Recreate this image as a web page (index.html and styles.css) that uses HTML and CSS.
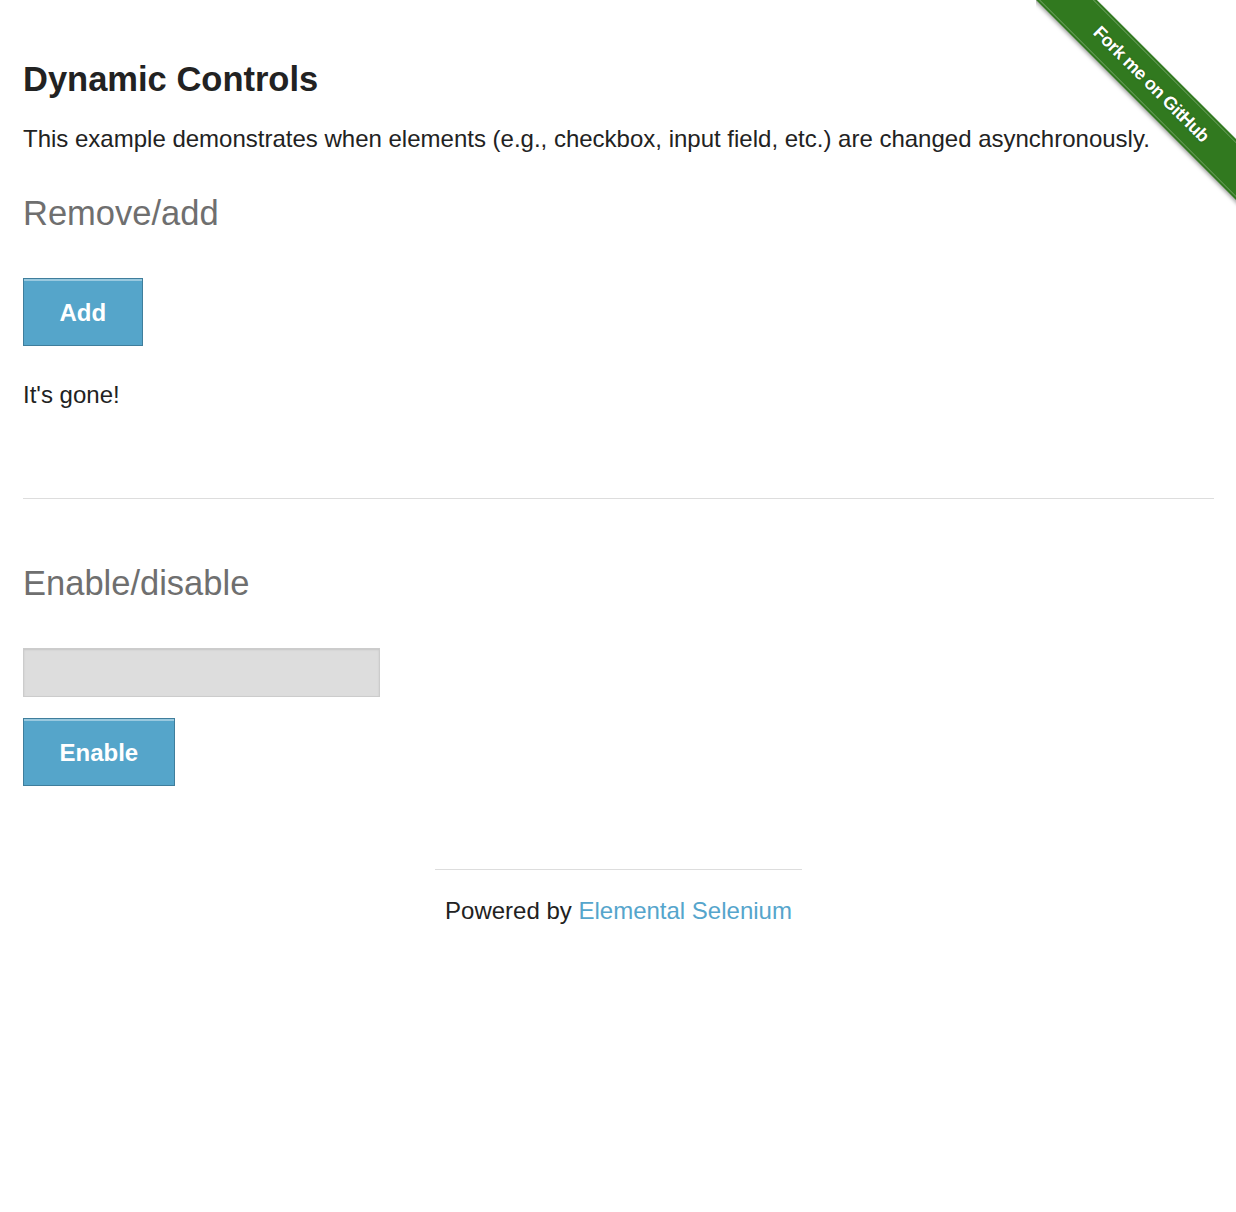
FILE: index.html
```html
<!DOCTYPE html>
<html lang="en">
<head>
<meta charset="utf-8">
<title>The Internet</title>
<link rel="stylesheet" href="styles.css">
</head>
<body>
<a class="ribbon-wrap" href="#"><span class="ribbon">Fork me on GitHub</span></a>
<div class="page">
  <div class="example">
    <h3 class="title">Dynamic Controls</h3>
    <p class="intro">This example demonstrates when elements (e.g., checkbox, input field, etc.) are changed asynchronously.</p>
    <h4 class="subtitle">Remove/add</h4>
    <form class="form form-checkbox">
      <button type="button" class="btn">Add</button>
      <p class="message">It's gone!</p>
    </form>
    <hr class="divider">
    <h4 class="subtitle subtitle-second">Enable/disable</h4>
    <form class="form form-input">
      <input type="text" class="field" disabled>
      <button type="button" class="btn btn-enable">Enable</button>
    </form>
  </div>
  <div class="footer">
    <hr class="footer-rule">
    <div class="footer-text">Powered by <a class="footer-link" href="#">Elemental Selenium</a></div>
  </div>
</div>
</body>
</html>
```
FILE: styles.css
```css
html, body {
  margin: 0;
  padding: 0;
  background: #fff;
}
body {
  font-family: "Liberation Sans", Arial, Helvetica, sans-serif;
  color: #222;
  font-size: 24px;
  line-height: 38.4px;
  position: relative;
}
.page {
  padding: 0 22px 0 23px;
}
.example {
  display: flex;
  flex-direction: column;
  align-items: flex-start;
}
.title {
  font-size: 34.5px;
  line-height: 41.4px;
  font-weight: bold;
  color: #222;
  margin: 59px 0 19.5px 0;
}
.intro {
  margin: 0;
}
.subtitle {
  font-size: 34.5px;
  line-height: 41.4px;
  font-weight: normal;
  color: #6f6f6f;
  margin: 35px 0 0 0;
}
.subtitle-second {
  margin-top: 64.5px;
}
.form {
  display: flex;
  flex-direction: column;
  align-items: flex-start;
  margin: 43px 0 0 0;
}
.btn {
  font-family: "Liberation Sans", Arial, Helvetica, sans-serif;
  font-size: 24px;
  font-weight: bold;
  line-height: 24px;
  color: #fff;
  background: #55a5ca;
  border: 1px solid #3f7e9c;
  box-shadow: inset 0 2px 0 rgba(255,255,255,0.4);
  padding: 22px 35.5px 20px 35.5px;
  margin: 0;
  cursor: pointer;
}
.message {
  margin: 30.5px 0 0 0;
}
.divider {
  align-self: stretch;
  border: 0;
  border-top: 1px solid #ddd;
  height: 0;
  margin: 83px 0 0 0;
}
.field {
  box-sizing: border-box;
  width: 357px;
  height: 49px;
  margin: 0;
  background: #ddd;
  border: 1px solid #ccc;
  box-shadow: inset 0 1px 2px rgba(0,0,0,0.1);
  font-size: 24px;
}
.btn-enable {
  margin-top: 21px;
}
.footer {
  display: flex;
  flex-direction: column;
  align-items: center;
  margin-top: 83px;
}
.footer-rule {
  width: 367px;
  border: 0;
  border-top: 1px solid #ddd;
  height: 0;
  margin: 0;
}
.footer-text {
  margin-top: 22.5px;
  text-align: center;
}
.footer-link {
  color: #55a5cc;
  text-decoration: none;
}
.ribbon-wrap {
  position: absolute;
  top: 0;
  right: 0;
  width: 200px;
  height: 210px;
  overflow: hidden;
  text-decoration: none;
}
.ribbon {
  position: absolute;
  left: -45px;
  top: 63px;
  width: 320px;
  height: 43px;
  box-sizing: border-box;
  background: #31791f;
  transform: rotate(45deg);
  box-shadow: 0 2px 4px rgba(0,0,0,0.35);
  color: #fff;
  font-family: "Liberation Sans", Arial, sans-serif;
  font-weight: bold;
  font-size: 18px;
  letter-spacing: -0.4px;
  line-height: 43px;
  text-align: center;
  text-shadow: 0 0 2px rgba(0,0,0,0.3);
}
.ribbon::before {
  content: "";
  position: absolute;
  left: 0;
  right: 0;
  top: 2px;
  bottom: 2px;
  border-top: 1px solid rgba(255,255,255,0.25);
  border-bottom: 1px solid rgba(255,255,255,0.25);
}
```
